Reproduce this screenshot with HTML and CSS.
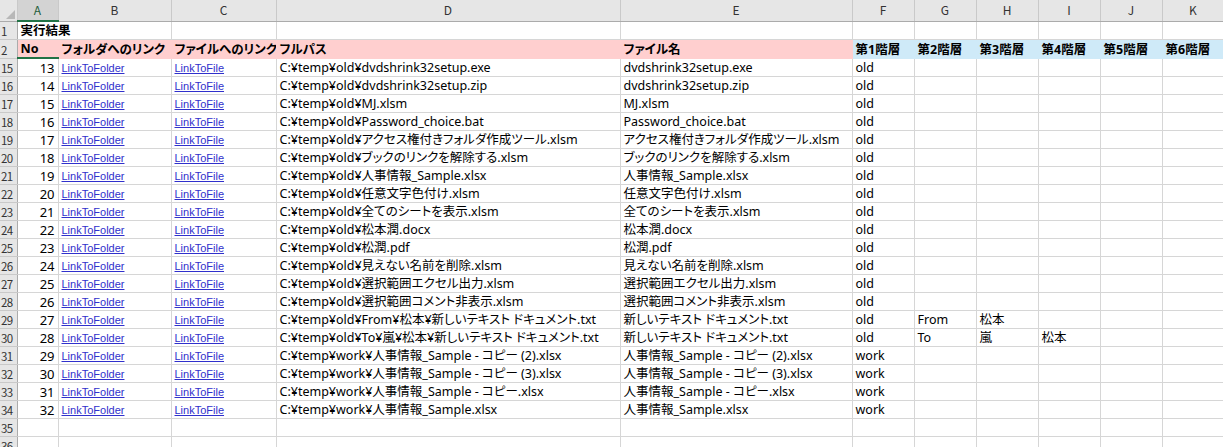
FILE: index.html
```html
<!DOCTYPE html>
<html lang="ja">
<head>
  <meta charset="UTF-8">
  <title>実行結果</title>
  <link rel="stylesheet" href="styles.css">
</head>
<body>
  <table class="sheet">
    <colgroup>
      <col class="c-rh"><col class="c-a"><col class="c-b"><col class="c-c"><col class="c-d"><col class="c-e">
      <col class="c-lv"><col class="c-lv"><col class="c-lv"><col class="c-lv"><col class="c-lv"><col class="c-lv">
    </colgroup>
    <thead>
      <tr class="col-head">
        <th class="corner"><span class="corner-mark"></span></th>
        <th class="active">A</th><th>B</th><th>C</th><th>D</th><th>E</th>
        <th>F</th><th>G</th><th>H</th><th>I</th><th>J</th><th>K</th>
      </tr>
    </thead>
    <tbody>
      <tr>
        <th class="rh">1</th>
        <td class="title" colspan="2">実行結果</td>
        <td></td><td></td><td></td><td></td><td></td><td></td><td></td><td></td><td></td>
      </tr>
      <tr class="head">
        <th class="rh">2</th>
        <td class="pink sel">No</td>
        <td class="pink">フォルダへのリンク</td>
        <td class="pink">ファイルへのリンク</td>
        <td class="pink">フルパス</td>
        <td class="pink">ファイル名</td>
        <td class="blue">第1階層</td><td class="blue">第2階層</td><td class="blue">第3階層</td>
        <td class="blue">第4階層</td><td class="blue">第5階層</td><td class="blue">第6階層</td>
      </tr>
    </tbody>
    <tbody id="rows"></tbody>
  </table>
  <script>
    // 行データ (No, フルパス, ファイル名, 階層...)
    const rows = [
      [13, 'C:¥temp¥old¥dvdshrink32setup.exe', 'dvdshrink32setup.exe', ['old']],
      [14, 'C:¥temp¥old¥dvdshrink32setup.zip', 'dvdshrink32setup.zip', ['old']],
      [15, 'C:¥temp¥old¥MJ.xlsm', 'MJ.xlsm', ['old']],
      [16, 'C:¥temp¥old¥Password_choice.bat', 'Password_choice.bat', ['old']],
      [17, 'C:¥temp¥old¥アクセス権付きフォルダ作成ツール.xlsm', 'アクセス権付きフォルダ作成ツール.xlsm', ['old']],
      [18, 'C:¥temp¥old¥ブックのリンクを解除する.xlsm', 'ブックのリンクを解除する.xlsm', ['old']],
      [19, 'C:¥temp¥old¥人事情報_Sample.xlsx', '人事情報_Sample.xlsx', ['old']],
      [20, 'C:¥temp¥old¥任意文字色付け.xlsm', '任意文字色付け.xlsm', ['old']],
      [21, 'C:¥temp¥old¥全てのシートを表示.xlsm', '全てのシートを表示.xlsm', ['old']],
      [22, 'C:¥temp¥old¥松本潤.docx', '松本潤.docx', ['old']],
      [23, 'C:¥temp¥old¥松潤.pdf', '松潤.pdf', ['old']],
      [24, 'C:¥temp¥old¥見えない名前を削除.xlsm', '見えない名前を削除.xlsm', ['old']],
      [25, 'C:¥temp¥old¥選択範囲エクセル出力.xlsm', '選択範囲エクセル出力.xlsm', ['old']],
      [26, 'C:¥temp¥old¥選択範囲コメント非表示.xlsm', '選択範囲コメント非表示.xlsm', ['old']],
      [27, 'C:¥temp¥old¥From¥松本¥新しいテキスト ドキュメント.txt', '新しいテキスト ドキュメント.txt', ['old', 'From', '松本']],
      [28, 'C:¥temp¥old¥To¥嵐¥松本¥新しいテキスト ドキュメント.txt', '新しいテキスト ドキュメント.txt', ['old', 'To', '嵐', '松本']],
      [29, 'C:¥temp¥work¥人事情報_Sample - コピー (2).xlsx', '人事情報_Sample - コピー (2).xlsx', ['work']],
      [30, 'C:¥temp¥work¥人事情報_Sample - コピー (3).xlsx', '人事情報_Sample - コピー (3).xlsx', ['work']],
      [31, 'C:¥temp¥work¥人事情報_Sample - コピー.xlsx', '人事情報_Sample - コピー.xlsx', ['work']],
      [32, 'C:¥temp¥work¥人事情報_Sample.xlsx', '人事情報_Sample.xlsx', ['work']]
    ];

    const body = document.getElementById('rows');
    let rowNo = 15;

    rows.forEach(([no, path, name, levels]) => {
      let html = `<th class="rh">${rowNo++}</th>
        <td class="num">${no}</td>
        <td><a class="link">LinkToFolder</a></td>
        <td><a class="link">LinkToFile</a></td>
        <td>${path}</td>
        <td>${name}</td>`;
      for (let i = 0; i < 6; i++) {
        html += `<td>${levels[i] || ''}</td>`;
      }
      const tr = document.createElement('tr');
      tr.innerHTML = html;
      body.appendChild(tr);
    });

    // 空行 35, 36
    for (let i = 0; i < 2; i++) {
      const tr = document.createElement('tr');
      tr.innerHTML = `<th class="rh">${rowNo++}</th>` + '<td></td>'.repeat(11);
      body.appendChild(tr);
    }
  </script>
</body>
</html>
```

FILE: styles.css
```css
/* シート表示 */
body {
  margin: 0;
  padding: 0;
  background-color: #ffffff;
  font-family: "Noto Sans", "Noto Sans CJK JP", sans-serif;
  font-feature-settings: "palt";
  overflow: hidden;
}

.sheet {
  border-collapse: collapse;
  table-layout: fixed;
  width: 1224px;
  font-size: 12.5px;
  color: #000000;
}

.c-rh { width: 17px; }
.c-a { width: 41px; }
.c-b { width: 113px; }
.c-c { width: 105px; }
.c-d { width: 344px; }
.c-e { width: 232px; }
.c-lv { width: 62px; }

.sheet tbody tr {
  height: 18px;
}

.sheet td {
  border: 1px solid #d6d6d6;
  padding: 0 3px;
  height: 17px;
  line-height: 16px;
  white-space: nowrap;
  overflow: hidden;
  vertical-align: bottom;
}

/* 列見出し */
.col-head th {
  height: 20px;
  background-color: #e6e6e6;
  border-left: 1px solid #c9c9c9;
  border-right: 1px solid #c9c9c9;
  border-bottom: 1px solid #ababab;
  font-family: "Noto Sans CJK JP", sans-serif;
  font-weight: normal;
  font-size: 12px;
  color: #333333;
  padding: 0;
  text-align: center;
  vertical-align: middle;
  line-height: 14px;
}
.col-head th.active {
  background-color: #d3d3d3;
  border-bottom: 2px solid #217346;
  color: #1f5e3a;
}
.col-head th.corner {
  position: relative;
  border-left: none;
}
.corner-mark {
  position: absolute;
  right: 2px;
  bottom: 2px;
  width: 0;
  height: 0;
  border-left: 9px solid transparent;
  border-bottom: 9px solid #b8b8b8;
}

/* 行見出し */
.rh {
  background-color: #e6e6e6;
  border-top: 1px solid #c9c9c9;
  border-bottom: 1px solid #c9c9c9;
  border-right: 1px solid #ababab;
  font-family: "Noto Sans CJK JP", sans-serif;
  font-weight: normal;
  font-size: 11.5px;
  color: #333333;
  padding: 0 0 0 1px;
  height: 17px;
  text-align: left;
  vertical-align: bottom;
  line-height: 15px;
  letter-spacing: -0.6px;
  overflow: hidden;
}

.title {
  font-weight: bold;
  font-size: 12.5px;
}

.head td {
  font-weight: bold;
}
.pink {
  background-color: #ffcfcf;
  border-color: #ffcfcf !important;
}
.blue {
  background-color: #cfeaf8;
  border-color: #cfeaf8 !important;
}
.head td.sel {
  border-bottom: 2px solid #217346 !important;
}

.num {
  text-align: right;
  font-size: 13px;
}

.link {
  font-family: "Liberation Sans", Arial, sans-serif;
  font-size: 11px;
  line-height: 1;
  color: #3030cc;
  text-decoration: underline;
}
```
